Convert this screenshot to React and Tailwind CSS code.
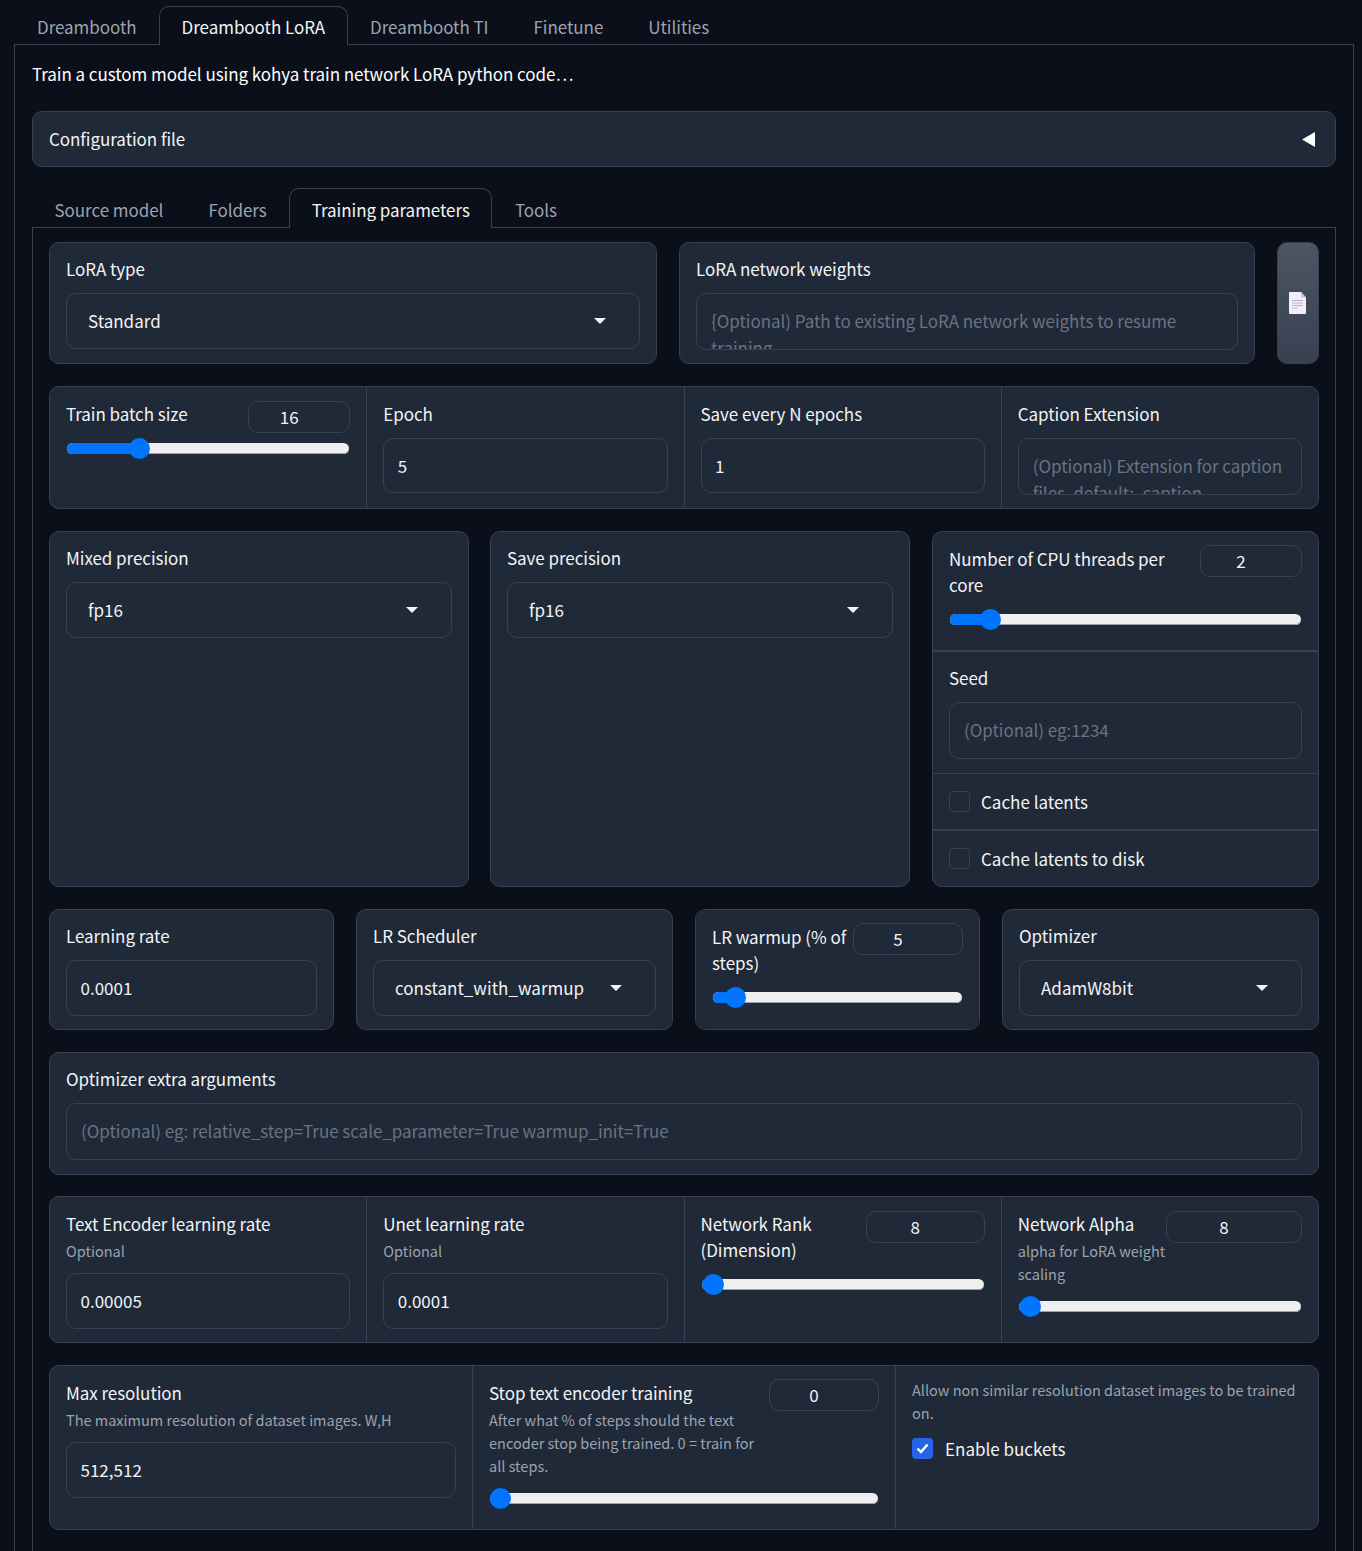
const FONT = "font-['Noto_Sans_CJK_SC','Source_Sans_Pro',sans-serif]";

function Label({ children }) {
  return <div className="text-[17px] leading-[26px] tracking-[-0.05px] text-[#f3f4f6]">{children}</div>;
}

function Sub({ children }) {
  return <div className="mt-[2px] text-[14.5px] leading-[23px] text-[#9ca3af]">{children}</div>;
}

function TextBox({ value, placeholder, short }) {
  if (placeholder) {
    return (
      <div className="mt-[11px] h-[57px] overflow-hidden rounded-[10px] border border-[#374151] pl-[14px] pr-[14px] pt-[13px] text-[17px] leading-[27px] tracking-[-0.05px] text-[#6b7280]">
        {placeholder}
      </div>
    );
  }
  const h = short ? "h-[55px]" : "h-[56px]";
  return (
    <div className={`mt-[11px] flex ${h} items-center rounded-[10px] border border-[#374151] pl-[13.5px] text-[17px] text-[#f3f4f6]`}>
      {value}
    </div>
  );
}

function Select({ value }) {
  return (
    <div className="mt-[11px] flex h-[56px] items-center justify-between rounded-[10px] border border-[#374151] pl-[21px] pr-[33px] text-[17px] text-[#f3f4f6]">
      <span>{value}</span>
      <svg width="12" height="6" viewBox="0 0 12 6"><path d="M0 0h12L6 6z" fill="#f3f4f6" /></svg>
    </div>
  );
}

function Track({ pos }) {
  return (
    <div className="relative mx-px mt-[10px] mb-[11px] h-[11px] rounded-full bg-[#efefef] shadow-[inset_0_-1px_0_#9ca3af]">
      <div className="absolute left-0 top-0 h-[11px] rounded-full bg-[#0075ff]" style={{ width: pos }} />
      <div className="absolute top-[-5px] h-[21px] w-[21px] rounded-full bg-[#0075ff]" style={{ left: pos - 10 }} />
    </div>
  );
}

function SliderCell({ label, sub, value, boxClass, pos, className = "" }) {
  return (
    <div className={`bg-[#1f2937] px-[16px] pb-[14px] pt-[14px] ${className}`}>
      <div className="flex items-start">
        <div className="min-w-0 flex-1 pb-[6px]">
          <Label>{label}</Label>
          {sub && <Sub>{sub}</Sub>}
        </div>
        <div className={`flex h-[32px] shrink-0 items-center justify-center rounded-[10px] border border-[#374151] pr-[20px] text-[17px] text-[#f3f4f6] ${boxClass}`}>
          {value}
        </div>
      </div>
      <Track pos={pos} />
    </div>
  );
}

function FieldCell({ label, sub, value, placeholder, short, className = "" }) {
  return (
    <div className={`bg-[#1f2937] px-[16px] pt-[14px] ${className}`}>
      <Label>{label}</Label>
      {sub && <Sub>{sub}</Sub>}
      <TextBox value={value} placeholder={placeholder} short={short} />
    </div>
  );
}

function SelectCell({ label, value, className = "" }) {
  return (
    <div className={`rounded-[10px] border border-[#374151] bg-[#1f2937] px-[16px] pt-[13px] ${className}`}>
      <Label>{label}</Label>
      <Select value={value} />
    </div>
  );
}

function CheckRow({ label, className = "" }) {
  return (
    <div className={`flex h-[55px] items-center bg-[#1f2937] px-[16px] ${className}`}>
      <span className="h-[21px] w-[21px] rounded-[4px] border border-[#374151]" />
      <span className="ml-[11px] text-[17px] text-[#f3f4f6]">{label}</span>
    </div>
  );
}

function Tab({ children, active, tall }) {
  if (active) {
    const size = tall ? "h-[40px] pt-[3px]" : "h-[39px] pt-[2px]";
    return (
      <div className={`z-10 -mb-px flex ${size} items-center rounded-t-[10px] border border-b-0 border-[#374151] bg-[#0b0f19] px-[21.5px] text-[17px] tracking-[-0.05px] text-[#f3f4f6]`}>
        {children}
      </div>
    );
  }
  return <div className="flex h-[38px] items-center px-[22.5px] pt-[4px] text-[17px] tracking-[-0.05px] text-[#9ca3af]">{children}</div>;
}

export default function App() {
  return (
    <div className={`h-[1551px] overflow-hidden bg-[#0b0f19] pl-[14px] pr-[8px] pt-[6px] ${FONT}`}>
      <div className="flex items-end pl-[0.5px]">
        <Tab>Dreambooth</Tab>
        <Tab active>Dreambooth LoRA</Tab>
        <Tab>Dreambooth TI</Tab>
        <Tab>Finetune</Tab>
        <Tab>Utilities</Tab>
      </div>
      <div className="border border-[#374151] px-[17px] pb-[40px]">
        <div className="mt-[16px] text-[17px] leading-[26px] tracking-[-0.05px] text-white">
          Train a custom model using kohya train network LoRA python code…
        </div>
        <div className="mt-[24px] flex h-[56px] items-center justify-between rounded-[10px] border border-[#374151] bg-[#1f2937] pl-[16px] pr-[20px] text-[17px] tracking-[-0.05px] text-[#f3f4f6]">
          <span>Configuration file</span>
          <svg width="13" height="15" viewBox="0 0 13 15"><path d="M13 0v15L0 7.5z" fill="#ffffff" /></svg>
        </div>
        <div className="mt-[21px] flex h-[39px] items-end">
          <Tab>Source model</Tab>
          <Tab>Folders</Tab>
          <Tab active tall>Training parameters</Tab>
          <Tab>Tools</Tab>
        </div>
        <div className="flex flex-col gap-[22px] border border-[#374151] px-[16px] pb-[40px] pt-[14px]">
          <div className="flex h-[122px] gap-[22px]">
            <SelectCell label="LoRA type" value="Standard" className="w-[608px]" />
            <div className="w-[576px] rounded-[10px] border border-[#374151] bg-[#1f2937] px-[16px] pt-[13px]">
              <Label>LoRA network weights</Label>
              <TextBox placeholder="{Optional) Path to existing LoRA network weights to resume training" />
            </div>
            <div className="flex w-[42px] items-center justify-center rounded-[10px] border border-[#374151] bg-gradient-to-b from-[#4b5563] to-[#374151]">
              <svg width="18" height="22" viewBox="0 0 18 22">
                <path d="M1 0h11l5 5.500V21a1 1 0 0 1-1 1H1a1 1 0 0 1-1-1V1a1 1 0 0 1 1-1z" fill="#f3eff8" />
                <path d="M12 0l5 5.500h-5z" fill="#c9c3d3" />
                <path d="M3 8.500h11M3 11h11M3 13.500h11M3 16h6" stroke="#b9b2c6" strokeWidth="1" />
              </svg>
            </div>
          </div>

          <div className="grid h-[123px] grid-cols-4 gap-px overflow-hidden rounded-[10px] border border-[#374151] bg-[#374151]">
            <SliderCell label="Train batch size" value="16" boxClass="w-[102px]" pos={72} />
            <FieldCell label="Epoch" value="5" short />
            <FieldCell label="Save every N epochs" value="1" short />
            <FieldCell label="Caption Extension" placeholder="(Optional) Extension for caption files. default: .caption" />
          </div>

          <div className="flex h-[356px] gap-[21px]">
            <SelectCell label="Mixed precision" value="fp16" className="w-[420px]" />
            <SelectCell label="Save precision" value="fp16" className="w-[420px]" />
            <div className="ml-px flex flex-1 flex-col gap-px overflow-hidden rounded-[10px] border border-[#374151] bg-[#374151]">
              <SliderCell label="Number of CPU threads per core" value="2" boxClass="-mt-px w-[102px]" pos={40} />
              <div className="mt-px flex-1 bg-[#1f2937] px-[16px] pt-[13px]">
                <Label>Seed</Label>
                <TextBox placeholder="(Optional) eg:1234" />
              </div>
              <CheckRow label="Cache latents" />
              <CheckRow label="Cache latents to disk" className="mt-px" />
            </div>
          </div>

          <div className="flex h-[121px] gap-[22px]">
            <div className="w-[285px] rounded-[10px] border border-[#374151] bg-[#1f2937] px-[16px] pt-[13px]">
              <Label>Learning rate</Label>
              <TextBox value="0.0001" />
            </div>
            <SelectCell label="LR Scheduler" value="constant_with_warmup" className="w-[317px]" />
            <div className="w-[285px] overflow-hidden rounded-[10px] border border-[#374151]">
              <SliderCell label="LR warmup (% of steps)" value="5" boxClass="-mt-px w-[110px]" pos={22} className="h-full" />
            </div>
            <SelectCell label="Optimizer" value="AdamW8bit" className="w-[317px]" />
          </div>

          <div className="h-[123px] rounded-[10px] border border-[#374151] bg-[#1f2937] px-[16px] pt-[13px]">
            <Label>Optimizer extra arguments</Label>
            <TextBox placeholder="(Optional) eg: relative_step=True scale_parameter=True warmup_init=True" />
          </div>

          <div className="-mt-px grid h-[147px] grid-cols-4 gap-px overflow-hidden rounded-[10px] border border-[#374151] bg-[#374151]">
            <FieldCell label="Text Encoder learning rate" sub="Optional" value="0.00005" />
            <FieldCell label="Unet learning rate" sub="Optional" value="0.0001" />
            <SliderCell label={<>Network Rank<br />(Dimension)</>} value="8" boxClass="w-[119px]" pos={11} />
            <SliderCell label="Network Alpha" sub={<span className="whitespace-nowrap">alpha for LoRA weight<br />scaling</span>} value="8" boxClass="w-[136px]" pos={11} />
          </div>

          <div className="grid h-[165px] grid-cols-3 gap-px overflow-hidden rounded-[10px] border border-[#374151] bg-[#374151]">
            <FieldCell label="Max resolution" sub="The maximum resolution of dataset images. W,H" value="512,512" />
            <SliderCell label="Stop text encoder training" sub="After what % of steps should the text encoder stop being trained. 0 = train for all steps." value="0" boxClass="-mt-px w-[110px]" pos={10} />
            <div className="bg-[#1f2937] px-[16px] pt-[12px]">
              <div className="text-[14.5px] leading-[23px] text-[#9ca3af]">
                Allow non similar resolution dataset images to be trained on.
              </div>
              <div className="mt-[12px] flex items-center">
                <span className="flex h-[21px] w-[21px] items-center justify-center rounded-[4px] bg-[#2563eb]">
                  <svg width="13" height="11" viewBox="0 0 13 11"><path d="M1.500 5.500L5 9l6.500-7.500" fill="none" stroke="#ffffff" strokeWidth="2.400" /></svg>
                </span>
                <span className="ml-[12px] text-[17px] text-[#f3f4f6]">Enable buckets</span>
              </div>
            </div>
          </div>
        </div>
      </div>
    </div>
  );
}
